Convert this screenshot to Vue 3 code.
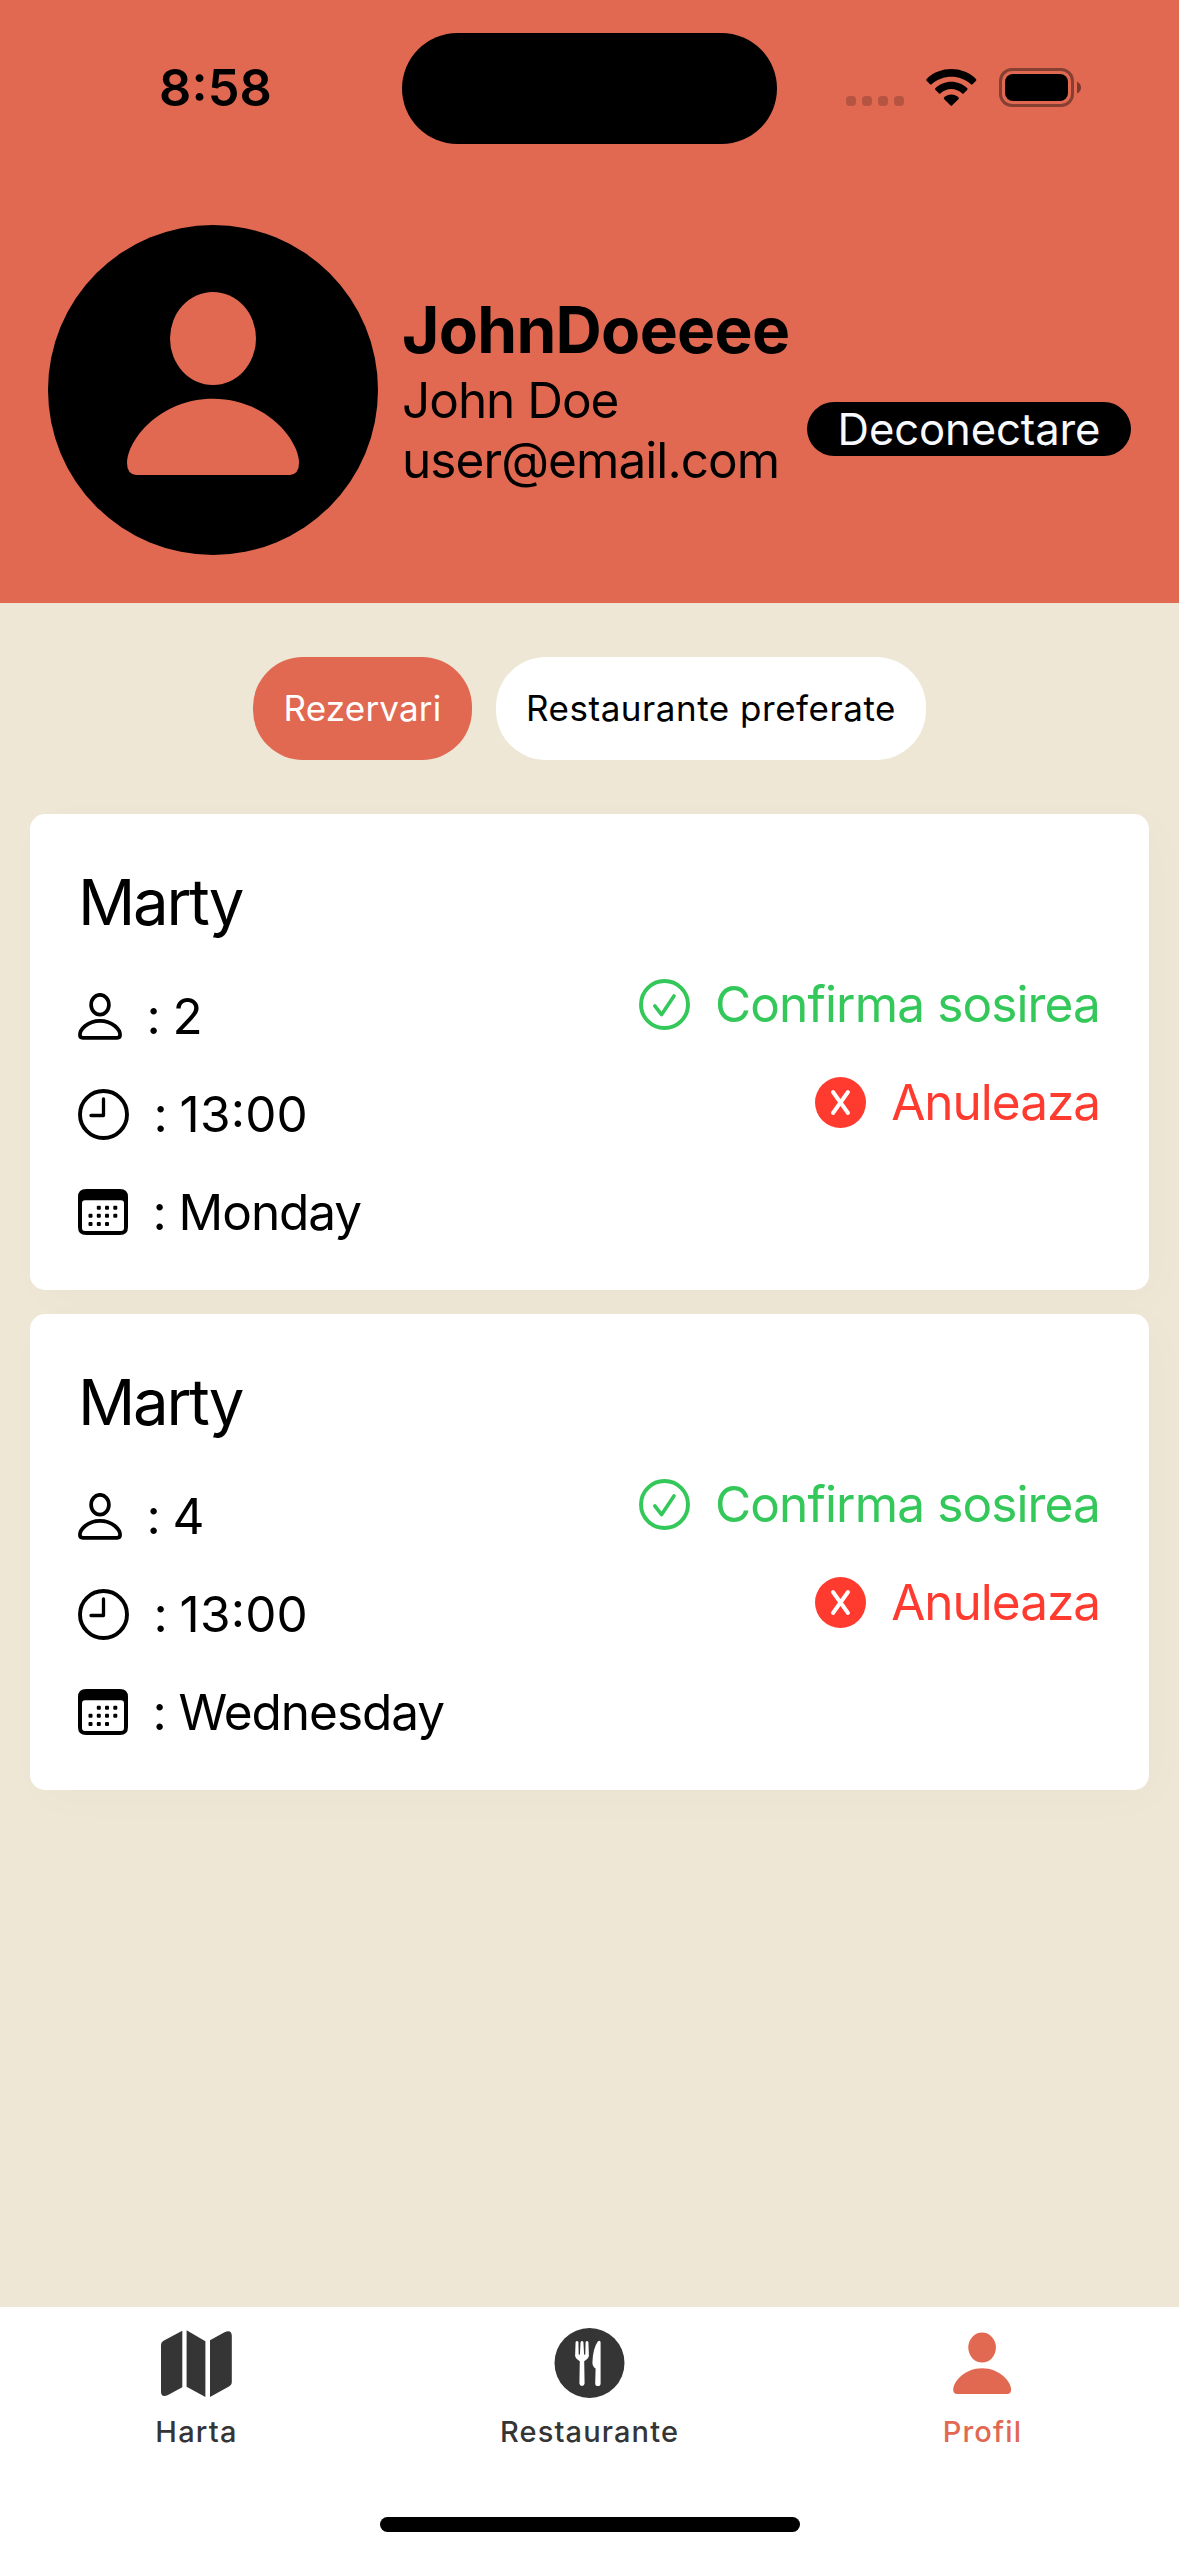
<script setup>
const reservations = [
  { id: 1, place: 'Marty', guests: '2', hour: '13:00', day: 'Monday' },
  { id: 2, place: 'Marty', guests: '4', hour: '13:00', day: 'Wednesday' }
]
</script>

<template>
  <div class="screen">
    <header class="header">
      <div class="status">
        <span class="time">8:58</span>
        <div class="island"></div>
        <div class="indicators">
          <svg class="dots" width="58" height="10" viewBox="0 0 58 10">
            <rect x="0" width="10" height="10" rx="4" />
            <rect x="16" width="10" height="10" rx="4" />
            <rect x="32" width="10" height="10" rx="4" />
            <rect x="48" width="10" height="10" rx="4" />
          </svg>
          <svg class="wifi" width="51" height="38" viewBox="0 0 51 38">
            <path d="M.6 10C14-3.2 36.6-3.2 50 10Q50.6 11 50 11.7L46.3 15.4Q45.6 15.8 45 15.3C34 5.3 16.6 5.3 5.6 15.3Q5 15.8 4.3 15.4L.6 11.7Q0 11 .6 10Z" />
            <path d="M9.3 19.2C18 10.5 32.6 10.5 41.3 19.2Q41.9 20 41.3 20.7L37.6 24.6Q37 25 36.3 24.6C30 18.5 20.6 18.5 14.3 24.6Q13.6 25 13 24.6L9.3 20.7Q8.7 20 9.3 19.2Z" />
            <path d="M18 28.6C22 24.3 28.6 24.3 32.6 28.6Q33 29.3 32.6 30L26 36.6Q25.3 37.2 24.6 36.6L18 30Q17.6 29.3 18 28.6Z" />
          </svg>
          <svg class="battery" width="82" height="39" viewBox="0 0 82 39">
            <rect x="1.5" y="1.5" width="72" height="36" rx="11.5" fill="none" stroke="#000" stroke-opacity=".4" stroke-width="3" />
            <rect x="6" y="6" width="63" height="27" rx="8" />
            <path d="M78 13.5Q82 15.5 82 19.5T78 25.5Z" fill-opacity=".45" />
          </svg>
        </div>
      </div>

      <div class="profile">
        <svg class="avatar" width="330" height="330" viewBox="48 225 330 330">
          <circle cx="213" cy="390" r="165" fill="#000" />
          <g fill="#e16952">
            <ellipse cx="213" cy="338.5" rx="43" ry="46.5" />
            <path d="M136 475Q127 474 127 463C127 440 160 398.7 213 398.7S299 440 299 463Q299 474 290 475Z" />
          </g>
        </svg>
        <div class="info">
          <div class="nick">JohnDoeeee</div>
          <div class="name">John Doe</div>
          <div class="mail">user@email.com</div>
        </div>
        <button class="logout">Deconectare</button>
      </div>
    </header>

    <main class="content">
      <div class="chips">
        <button class="chip active">Rezervari</button>
        <button class="chip wide">Restaurante preferate</button>
      </div>

      <section class="list">
        <article v-for="r in reservations" :key="r.id" class="card">
          <h2 class="place">{{ r.place }}</h2>
          <div class="body">
            <div class="details">
              <div class="row">
                <svg width="44" height="47" viewBox="0 0 44 47" fill="none" stroke="#000" stroke-width="3.7">
                  <ellipse cx="22" cy="11.7" rx="8.9" ry="9.9" />
                  <path d="M4.8 44.8Q1.9 44.8 1.9 41.8C1.9 37 9 27.8 22 27.8S42.1 37 42.1 41.8Q42.1 44.8 39.2 44.8Z" />
                </svg>
                <span class="text"><span class="colon">: </span>{{ r.guests }}</span>
              </div>
              <div class="row">
                <svg width="51" height="51" viewBox="0 0 51 51" fill="none" stroke="#000">
                  <circle cx="25.5" cy="25.5" r="23.5" stroke-width="3.9" />
                  <path d="M25.5 10V26.5H13" stroke-width="3.3" stroke-linecap="round" stroke-linejoin="round" />
                </svg>
                <span class="text"><span class="colon">: </span><span class="hour">{{ r.hour }}</span></span>
              </div>
              <div class="row">
                <svg width="50" height="46" viewBox="78 1189 50 46">
                  <path fill-rule="evenodd" d="M86 1189H120Q128 1189 128 1197V1227Q128 1235 120 1235H86Q78 1235 78 1227V1197Q78 1189 86 1189ZM85 1200.3Q82 1200.3 82 1203.3V1228Q82 1231 85 1231H121Q124 1231 124 1228V1203.3Q124 1200.3 121 1200.3Z" />
                  <g>
                    <rect x="96.8" y="1205.7" width="4" height="4" rx="1" />
                    <rect x="105" y="1205.7" width="4" height="4" rx="1" />
                    <rect x="113.3" y="1205.7" width="4" height="4" rx="1" />
                    <rect x="88.5" y="1213.8" width="4" height="4" rx="1" />
                    <rect x="96.8" y="1213.8" width="4" height="4" rx="1" />
                    <rect x="105" y="1213.8" width="4" height="4" rx="1" />
                    <rect x="113.3" y="1213.8" width="4" height="4" rx="1" />
                    <rect x="88.5" y="1222" width="4" height="4" rx="1" />
                    <rect x="96.8" y="1222" width="4" height="4" rx="1" />
                    <rect x="105" y="1222" width="4" height="4" rx="1" />
                  </g>
                </svg>
                <span class="text"><span class="colon">: </span>{{ r.day }}</span>
              </div>
            </div>
            <div class="actions">
              <div class="row confirm">
                <svg width="51" height="51" viewBox="0 0 51 51" fill="none" stroke="currentColor">
                  <circle cx="25.5" cy="25.5" r="23.5" stroke-width="3.9" />
                  <path d="M15.8 26.8L22.6 35.6L35 17" stroke-width="3.6" stroke-linecap="round" stroke-linejoin="round" />
                </svg>
                <span class="text">Confirma sosirea</span>
              </div>
              <div class="row cancel">
                <svg width="51" height="51" viewBox="0 0 51 51">
                  <circle cx="25.5" cy="25.5" r="25.5" fill="currentColor" />
                  <path d="M18 15L33 36M33 15L18 36" stroke="#fff" stroke-width="3.9" stroke-linecap="round" />
                </svg>
                <span class="text">Anuleaza</span>
              </div>
            </div>
          </div>
        </article>
      </section>
    </main>

    <nav class="tabs">
      <div class="tabrow">
        <div class="tab">
          <svg width="72" height="72" viewBox="161 2327 72 72" fill="currentColor">
            <path d="M182.3 2330.7V2387.3L167.5 2395.3Q161 2397.8 161 2391.5V2344.5Q161 2342 164 2340.4Z" />
            <path d="M186.6 2330.3L205.4 2341.3V2397L186.6 2386.7Z" />
            <path d="M210 2340.3L224.5 2332.2Q231.8 2329.2 231.8 2336V2382Q231.8 2385 228.5 2386.8L210 2397Z" />
          </svg>
          <span class="label">Harta</span>
        </div>
        <div class="tab">
          <svg width="72" height="72" viewBox="8.5 7 72 72">
            <circle cx="44" cy="43" r="35" fill="currentColor" />
            <g fill="#fff">
              <path d="M30.1 22Q31.5 19.8 32.9 22L33.2 34.2Q33.8 35.4 34.4 34.2L35.1 22Q36.5 19.8 37.9 22L38.6 34.2Q39.2 35.4 39.8 34.2L40.1 22Q41.5 19.8 42.9 22L43.4 35.8Q43.3 38.5 38.7 41.2L39.1 63.6Q38.9 66 36.5 66T33.9 63.6L34.3 41.2Q29.7 38.5 29.6 35.8Z" />
              <path d="M55.1 22.2V63.4Q55 66 52.4 66T49.7 63.4L50.1 48.6Q46.9 46.5 46.9 42.8Q47.3 28.5 52.3 21.6Q54.8 19.4 55.1 22.2Z" />
            </g>
          </svg>
          <span class="label long">Restaurante</span>
        </div>
        <div class="tab current">
          <svg width="72" height="72" viewBox="946.7 2327 72 72" fill="currentColor">
            <ellipse cx="981.8" cy="2347.6" rx="13.8" ry="15" />
            <path d="M957 2394Q952.9 2394 952.9 2389.5C952.9 2382 964 2368.3 981.8 2368.3S1010.8 2382 1010.8 2389.5Q1010.8 2394 1006.6 2394Z" />
          </svg>
          <span class="label">Profil</span>
        </div>
      </div>
      <div class="home"></div>
    </nav>
  </div>
</template>

<style>
body {
  margin: 0;
}
</style>

<style scoped>
.screen {
  width: 1179px;
  height: 2556px;
  display: flex;
  flex-direction: column;
  background: #eee7d5;
  color: #000;
  font-family: Inter, "Liberation Sans", sans-serif;
  font-feature-settings: "calt" 1;
  overflow: hidden;
}
button {
  border: 0;
  margin: 0;
  padding: 0;
  font-family: inherit;
  white-space: nowrap;
}
svg {
  display: block;
  flex: none;
}
.header {
  height: 603px;
  flex: none;
  background: #e16952;
}
.status {
  height: 225px;
  display: flex;
  align-items: flex-start;
}
.time {
  width: 243px;
  margin-top: 58px;
  padding-left: 159px;
  font-size: 50.5px;
  font-weight: 600;
  line-height: 60px;
  letter-spacing: 0.1px;
}
.island {
  width: 375px;
  height: 111px;
  margin-top: 33px;
  border-radius: 56px;
  background: #000;
}
.indicators {
  display: flex;
  align-items: flex-end;
  margin: 68px 0 0 69px;
}
.dots {
  margin-bottom: 1px;
  fill-opacity: 0.2;
}
.wifi {
  margin-left: 22px;
}
.battery {
  margin-left: 22px;
}
.profile {
  display: flex;
  align-items: center;
  height: 330px;
  padding: 0 48px;
}
.info {
  margin-left: 24px;
  white-space: nowrap;
}
.nick {
  font-size: 64px;
  font-weight: 700;
  line-height: 80px;
  letter-spacing: -0.69px;
}
.name,
.mail {
  font-size: 49.5px;
  line-height: 60px;
}
.name {
  letter-spacing: -1.03px;
}
.mail {
  letter-spacing: -0.93px;
}
.logout {
  align-self: flex-start;
  width: 324px;
  height: 54px;
  margin: 177px 0 0 auto;
  border-radius: 27px;
  background: #000;
  color: #f8faff;
  font-size: 43.6px;
  line-height: 56px;
  letter-spacing: -0.11px;
}
.content {
  flex: 1;
}
.chips {
  display: flex;
  justify-content: center;
  gap: 24px;
  padding-top: 54px;
}
.chip {
  width: 219px;
  height: 103px;
  padding-bottom: 2px;
  border-radius: 50px;
  background: #fff;
  color: #000;
  font-size: 35px;
  letter-spacing: 0.18px;
}
.chip.active {
  background: #e16952;
  color: #fff;
}
.chip.wide {
  width: 430px;
  letter-spacing: 0.53px;
}
.list {
  display: flex;
  flex-direction: column;
  gap: 24px;
  padding: 54px 30px 0;
}
.card {
  height: 476px;
  padding: 48px 49px 0 48px;
  box-sizing: border-box;
  border-radius: 15px;
  background: #fff;
  box-shadow: 9px 9px 45px rgba(0, 0, 0, 0.02);
}
.place {
  margin: 0;
  font-size: 63.5px;
  font-weight: 400;
  line-height: 80px;
  letter-spacing: -2.3px;
}
.body {
  display: flex;
  justify-content: space-between;
}
.details {
  padding-top: 25px;
}
.actions {
  display: flex;
  flex-direction: column;
  align-items: flex-end;
  padding-top: 13px;
}
.row {
  display: flex;
  align-items: center;
  gap: 25px;
  height: 98px;
}
.details .row {
  gap: 24.5px;
}
.text {
  font-size: 49.5px;
  line-height: 98px;
  letter-spacing: -1.05px;
  white-space: pre;
}
.colon {
  font-feature-settings: "calt" 0;
}
.hour {
  letter-spacing: 0.2px;
}
.confirm {
  color: #34c759;
}
.confirm .text {
  letter-spacing: -0.86px;
}
.cancel {
  color: #ff3b30;
}
.cancel .text {
  letter-spacing: -1.02px;
}
.tabs {
  display: flex;
  flex-direction: column;
  justify-content: space-between;
  align-items: center;
  height: 249px;
  flex: none;
  padding: 20px 0 24px;
  box-sizing: border-box;
  background: #fff;
}
.tabrow {
  display: flex;
  width: 100%;
}
.tab {
  flex: 1;
  display: flex;
  flex-direction: column;
  align-items: center;
  color: #353535;
}
.tab.current {
  color: #e16952;
}
.label {
  margin-top: 15px;
  font-size: 29px;
  font-weight: 500;
  line-height: 36px;
  letter-spacing: 1.2px;
}
.label.long {
  letter-spacing: 1.14px;
}
.home {
  width: 420px;
  height: 15px;
  border-radius: 8px;
  background: #000;
}
</style>
